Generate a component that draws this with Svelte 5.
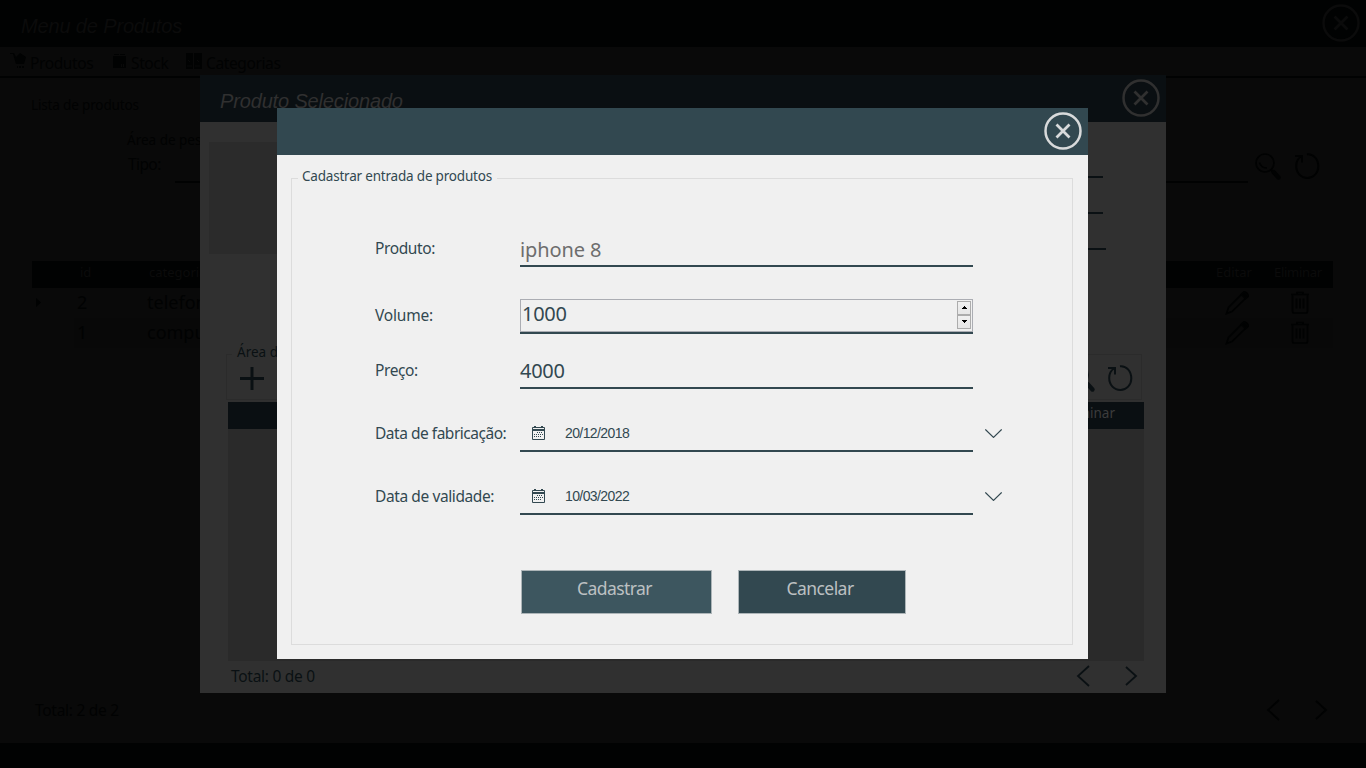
<script>
  const dates = [
    { label: 'Data de fabricação:', value: '20/12/2018' },
    { label: 'Data de validade:', value: '10/03/2022' }
  ];
  const rows = [
    { id: '2', category: 'telefones' },
    { id: '1', category: 'computador' }
  ];
</script>

{#snippet close()}
  <svg class="close" width="40" height="40" viewBox="0 0 40 40" fill="none" stroke="currentColor">
    <circle cx="20" cy="20" r="17.500" stroke-width="2.500" />
    <path d="M13.500 13.500 26.500 26.500M26.500 13.500 13.500 26.500" stroke-width="2.800" />
  </svg>
{/snippet}

{#snippet search()}
  <svg width="28" height="30" viewBox="0 0 28 30" fill="none" stroke="currentColor">
    <circle cx="10" cy="11" r="9" stroke-width="1.700" />
    <path d="M4.500 10.500Q6 16 12 16" stroke-width="1.500" />
    <path d="M16 18 18.500 20.500" stroke-width="2" />
    <path d="M18.500 20 23.500 25.500" stroke-width="4.400" stroke-linecap="round" />
  </svg>
{/snippet}

{#snippet refresh()}
  <svg width="28" height="30" viewBox="0 0 28 30" fill="none" stroke="currentColor" stroke-width="2">
    <path d="M13 2.200C19.500 1.500 24.300 7.500 24.300 14.500C24.300 21 19.500 26 13.500 26C7 26 2.200 21 2.200 14C2.200 10 3.800 6.500 7 4.500" />
    <path d="M1 4H8V10.500" />
  </svg>
{/snippet}

{#snippet pager()}
  <svg width="62" height="24" viewBox="0 0 62 24" fill="none" stroke="currentColor" stroke-width="1.800">
    <path d="M13 2 2 12 13 22M50 3 60 12 50 21" />
  </svg>
{/snippet}

<div class="desktop">
  <section class="main">
    <header><h1>Menu de Produtos</h1>{@render close()}</header>
    <nav>
      <span class="n1"><svg width="18" height="18" viewBox="0 0 18 18" fill="currentColor"><path d="M0 1H4L6 5L8 3L10 1L13 3L16 5L14 12H6L3 2H0zM7 14h1v2H7zM9 14h2v2H9zM12 14h2v2h-2z" /></svg>Produtos</span>
      <span class="n2"><svg width="16" height="18" viewBox="0 0 16 18"><path fill="currentColor" d="M2 2H7V3H2zM8 2H13V3H8zM1 4H14V16H1z" /><path stroke="#090909" d="M9.500 12v3M11.500 12v3" /></svg>Stock</span>
      <span class="n3"><svg width="18" height="18" viewBox="0 0 18 18"><path fill="currentColor" d="M1 1H8V17H1zM9 1H17V17H9z" /><path stroke="#090909" d="M2 14H7M10 14H15M3 8l2 2M12 8l2 2" /></svg>Categorias</span>
    </nav>
    <p class="list-title">Lista de produtos</p>
    <p class="area">Área de pesquisa</p>
    <div class="filter">
      <span>Tipo:</span><i class="line"></i>
      {@render search()}{@render refresh()}
    </div>
    <div class="table">
      <div class="thead"><span></span><span>id</span><span>categoria</span><span></span><span>Editar</span><span>Eliminar</span></div>
      {#each rows as r, i}
        <div class="tr" class:alt={i === 1}>
          <span class="mark">{#if i === 0}<svg width="5" height="9" viewBox="0 0 5 9" fill="currentColor"><path d="M0 0 5 4.500 0 9z" /></svg>{/if}</span><span>{r.id}</span><span>{r.category}</span><span></span>
          <span class="ico"><svg width="24" height="24" viewBox="0 0 24 24" fill="none" stroke="currentColor" stroke-width="1.700"><path d="M1.500 22.500 3.500 16.500 18 2Q21 0 22.500 3T21.500 6.500L7 20.500z" /><path d="M16.500 3.500 19 1 23 5 20.500 7.500z" fill="currentColor" /></svg></span>
          <span class="ico"><svg width="20" height="24" viewBox="0 0 20 24" fill="none" stroke="currentColor" stroke-width="1.700"><path d="M1 3.500H19M7 3V1.500H13V3M2.500 4V20Q2.500 22 4 22H16Q17.500 22 17.500 20V4M6.500 7.500V17.500M10 7.500V17.500M13.500 7.500V17.500" /></svg></span>
        </div>
      {/each}
    </div>
    <div class="main-foot"><span>Total: 2 de 2</span>{@render pager()}</div>
    <footer></footer>
  </section>

  <section class="selected">
    <header><h1>Produto Selecionado</h1>{@render close()}</header>
    <div class="info">
      <div class="photo"></div>
      <div class="stubs"><i></i><i></i><i></i></div>
    </div>
    <div class="tools">
      <span class="tools-title">Área de pesquisa</span>
      <svg width="28" height="28" viewBox="0 0 28 28" stroke="currentColor" stroke-width="3"><path d="M3 14.500H27M15 3V26" /></svg>
      <b></b>
      {@render search()}{@render refresh()}
    </div>
    <div class="grid-head">Eliminar</div>
    <div class="grid-body"></div>
    <div class="sel-foot"><span>Total: 0 de 0</span>{@render pager()}</div>
  </section>

  <section class="dialog">
    <header>{@render close()}</header>
    <form>
      <div class="legend"><span>Cadastrar entrada de produtos</span></div>
      <div class="row r1"><span class="label">Produto:</span><div class="field product"><span>iphone 8</span></div></div>
      <div class="row r2">
        <span class="label l2">Volume:</span>
        <div class="field number">
          <div class="box"><span>1000</span>
            <div class="spin">
              <i><svg width="5" height="3" viewBox="0 0 5 3"><path d="M0 3V2H1V1H2V0H3V1H4V2H5V3z" /></svg></i>
              <i><svg width="5" height="3" viewBox="0 0 5 3"><path d="M0 0V1H1V2H2V3H3V2H4V1H5V0z" /></svg></i>
            </div>
          </div>
        </div>
      </div>
      <div class="row r3"><span class="label">Preço:</span><div class="field price"><span>4000</span></div></div>
      {#each dates as d, i}
        <div class="row date"><span class="label" class:wide={i === 0}>{d.label}</span>
          <div class="field">
            <svg width="13" height="14" viewBox="0 0 13 14"><path fill="none" stroke="currentColor" d="M.5 1.500H12.500V13.500H.5z" /><path fill="currentColor" d="M0 3h13v2H0zM2 0h2v2H2zM9 0h2v2H9z" /><path stroke="currentColor" stroke-dasharray="1 1" d="M5 6.500h6M2 8.500h9M2 10.500h7" stroke-width="1" /></svg>
            <span>{d.value}</span>
          </div>
          <svg class="chev" width="17" height="9" viewBox="0 0 17 9" fill="none" stroke="currentColor" stroke-width="1.200"><path d="M.3.4 8.500 8.400 16.700.4" /></svg>
        </div>
      {/each}
      <div class="buttons"><button type="button" class="ok">Cadastrar</button><button type="button" class="cancel">Cancelar</button></div>
    </form>
  </section>
</div>

<style>
  :global(body) { margin: 0; overflow: hidden; background: #090909; }
  * { box-sizing: border-box; }
  .desktop { position: relative; width: 1366px; height: 768px; overflow: hidden; font-family: 'Noto Sans', 'Open Sans', sans-serif; font-size: 15.500px; white-space: nowrap; }
  svg { display: block; flex: none; }
  p, h1 { margin: 0; }
  section { position: absolute; display: flex; flex-direction: column; }
  header { height: 47px; display: flex; align-items: center; justify-content: flex-end; flex: none; }
  .close { margin-bottom: 2px; }
  h1 { margin-right: auto; padding: 5px 0 0 20px; font: italic 400 20px/24px 'Liberation Sans', sans-serif; letter-spacing: -.15px; }

  .main { inset: 0; background: #090909; color: #010202; }
  .main header { background: #010202; color: #0b0b0b; padding-right: 5px; }
  .main h1 { padding-left: 21px; }
  nav { display: flex; height: 31px; flex: none; border-bottom: 2px solid #010202; padding-left: 10px; line-height: 32px; letter-spacing: -.38px; }
  nav span { display: flex; gap: 2px; }
  nav svg { margin-top: 5px; }
  .n1 { width: 102px; }
  .n2 { width: 73px; }
  .n2, .n3 { gap: 3px; }
  .list-title { padding: 17px 0 0 31px; font-size: 13.500px; line-height: 20px; letter-spacing: -.15px; }
  .area { padding: 15px 0 0 127px; font-size: 13.500px; line-height: 20px; }
  .filter { display: flex; height: 34px; padding-left: 128px; line-height: 29px; letter-spacing: -.6px; }
  .filter span { width: 47px; }
  .filter .line { width: 1073px; height: 33px; border-bottom: 2px solid #010202; margin-right: 7px; }
  .filter svg { margin: 2px 11px 0 0; }
  .table { margin: 77px 33px 0 32px; }
  .thead, .tr { display: grid; grid-template-columns: 42px 69px 400px 664px 79px 1fr; }
  .thead { height: 27px; background: #010202; color: #0b0b0b; font-size: 13px; line-height: 22px; }
  .thead span:nth-child(2), .thead span:nth-child(3) { padding-left: 6px; }
  .thead span:nth-child(5) { padding-left: 9px; }
  .thead span:nth-child(6) { letter-spacing: -.3px; margin-left: -12px; }
  .tr { height: 30px; line-height: 29px; font-size: 18px; }
  .tr span:nth-child(2) { padding-left: 3px; }
  .tr span:nth-child(3) { padding-left: 4px; }
  .tr .mark { padding: 10px 0 0 4px; }
  .alt span:not(.mark) { background: #080808; }
  .ico { padding-top: 3px; }
  .ico:nth-child(5) { padding-left: 18px; }
  .ico:nth-child(6) { padding-left: 4px; }
  .main-foot { display: flex; justify-content: space-between; margin-top: auto; height: 45px; padding: 0 38px 0 35px; line-height: 24px; letter-spacing: -.27px; }
  footer { height: 25px; background: #010202; flex: none; }

  .selected { left: 200px; top: 75px; width: 966px; height: 618px; background: #303030; color: #0a1013; }
  .selected header { background: #0a0f12; color: #303030; padding-right: 5px; }
  .info { display: flex; justify-content: space-between; padding: 20px 60px 0 9px; height: 232px; }
  .photo { width: 240px; height: 112px; background: #2b2b2b; }
  .stubs { display: flex; flex-direction: column; gap: 34px; padding-top: 34px; }
  .stubs i { width: 200px; height: 2px; margin-left: -3px; background: #0a1013; }
  .stubs i:last-child { margin-left: 0; }
  .tools { position: relative; display: flex; margin: 0 24px 0 26px; height: 46px; border: 1px solid #2b2b2b; padding: 9px 6px 0 10px; }
  .tools-title { position: absolute; left: 5px; top: -13px; padding: 0 5px; line-height: 20px; font-size: 13.500px; background: #303030; }
  .tools b { flex: 1; }
  .tools svg:nth-of-type(2) { margin-right: 10px; }
  .grid-head { height: 27px; margin: 2px 22px 0 28px; background: #0a0f12; color: #3c3c3c; text-align: right; padding-right: 29px; font-size: 13.500px; line-height: 22px; }
  .grid-body { height: 232px; margin: 0 22px 0 28px; background: #2a2a2a; }
  .sel-foot { display: flex; justify-content: space-between; padding: 3px 28px 0 31px; line-height: 24px; letter-spacing: -.27px; }

  .dialog { left: 277px; top: 108px; width: 811px; height: 551px; background: #f0f0f0; color: #324850; }
  .dialog header { background: #324850; color: #d8dadb; padding-right: 5px; }
  form { margin: 23px 15px 14px 14px; flex: 1; border: 1px solid #dcdcdc; padding-left: 83px; }
  .legend { display: flex; align-items: flex-start; height: 48px; margin-left: -77px; }
  .legend span { margin-top: -13px; padding: 0 5px 0 4px; font-size: 13.500px; line-height: 20px; letter-spacing: -.2px; background: #f0f0f0; }
  .row { display: flex; height: 40px; line-height: 42px; margin-bottom: 23px; }
  .r1 { margin-bottom: 27px; }
  .r2 { margin-bottom: 15px; }
  .label { width: 145px; letter-spacing: -.4px; }
  .l2 { letter-spacing: -.18px; }
  .wide { letter-spacing: -.48px; }
  .field { width: 453px; border-bottom: 2px solid #324850; }
  .product, .price { font-size: 20px; line-height: 44px; letter-spacing: -.3px; }
  .product { color: #6d6d6d; letter-spacing: -.12px; line-height: 46px; }
  .number { padding-top: 5px; }
  .box { display: flex; justify-content: space-between; height: 33px; border: 1px solid #abadb3; padding: 0 1px; font-size: 20px; line-height: 28px; letter-spacing: -.3px; }
  .spin { padding-top: 1px; }
  .spin i { display: grid; place-items: center; width: 14px; height: 14px; border: 1px solid #acacac; background: linear-gradient(#f0f0f0, #e6e6e6); }
  .spin svg { fill: #000; margin-bottom: 1px; }
  .date .field { display: flex; padding-left: 12px; }
  .date .field svg { margin-top: 14px; }
  .date .field span { margin-left: 20px; font: 14px/42px 'Liberation Sans', sans-serif; letter-spacing: -.6px; }
  .chev { margin: 17px 0 0 12px; }
  .buttons { display: flex; gap: 26px; padding: 32px 0 0 146px; }
  button { height: 44px; padding: 0 4px 8px 0; border: 1px solid #adb5b8; font-family: inherit; font-size: 17.500px; letter-spacing: -.55px; color: #bcc0c2; }
  .ok { width: 191px; background: #3d565f; }
  .cancel { width: 168px; background: #324850; }
</style>
